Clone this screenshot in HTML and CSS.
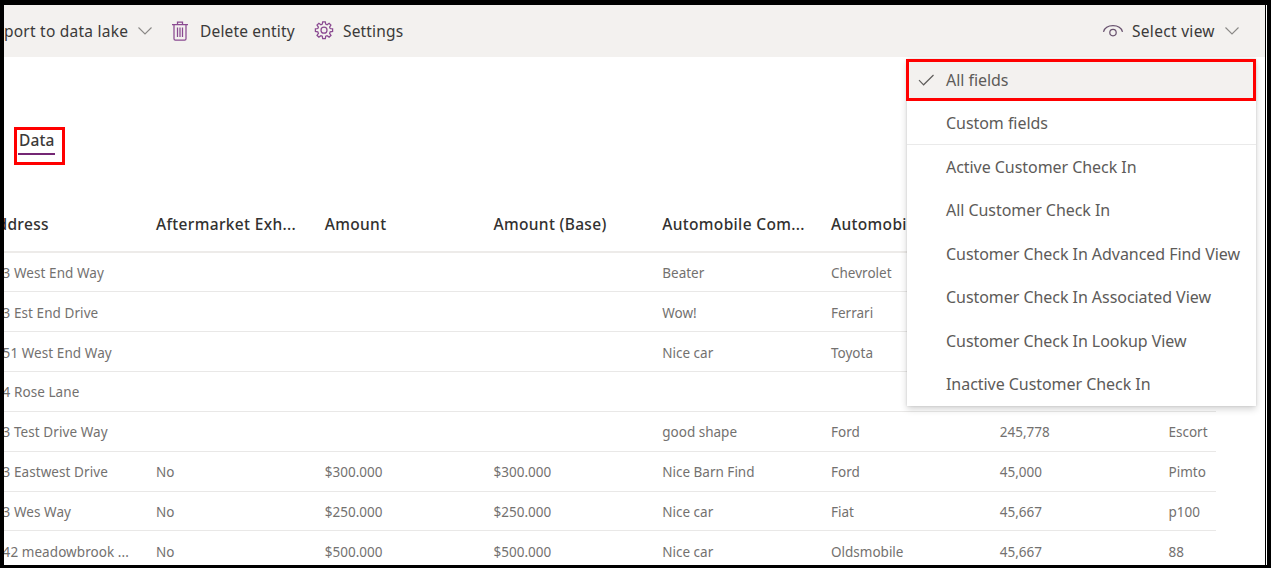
FILE: index.html
```html
<!DOCTYPE html>
<html lang="en">
<head>
<meta charset="utf-8">
<title>Customer Check In</title>
<link rel="stylesheet" href="styles.css">
</head>
<body>
<div class="frame">
<div class="screen">
  <header class="toolbar">
    <div class="commands">
      <span class="label export">port to data lake</span>
      <svg class="chevron" width="16" height="10" viewBox="0 0 16 10"><path d="M1.500 1.500 8 8l6.500-6.500"/></svg>
      <svg class="icon trash" width="18" height="20" viewBox="0 0 18 20"><path d="M1 3.500h16M6.500 3V1h5v2M3 3.500v14.200q0 1.300 1.300 1.300h9.400q1.300 0 1.300-1.300V3.500M6.500 6.500v9.500M9 6.500v9.500M11.500 6.500v9.500"/></svg>
      <span class="label delete">Delete entity</span>
      <svg class="icon gear" width="20" height="20" viewBox="0 0 20 20"><path d="M8.700.8h2.600l.4 2.300 1.400.6 2-1.400 1.800 1.800-1.300 2 .6 1.400 2.400.4v2.500l-2.400.4-.6 1.500 1.400 2-1.900 1.800-2-1.400-1.400.6-.4 2.300H8.700l-.4-2.300-1.400-.6-2 1.400L3 14.300l1.400-2-.6-1.500-2.400-.4V7.900l2.400-.4.6-1.400L3 4.100l1.900-1.800 2 1.400 1.400-.6z"/><circle cx="10" cy="9.200" r="3"/></svg>
      <span class="label settings">Settings</span>
    </div>
    <div class="view-picker">
      <svg class="icon eye" width="22" height="14" viewBox="0 0 22 14"><path d="M1.500 7.800C2.600 4 6 1.700 11 1.700s8.400 2.300 9.500 6.100"/><circle cx="11" cy="8.600" r="3.200"/></svg>
      <span class="label select">Select view</span>
      <svg class="chevron" width="16" height="10" viewBox="0 0 16 10"><path d="M1.500 1.500 8 8l6.500-6.500"/></svg>
    </div>
  </header>
  <nav class="tabs"><div class="tab-outline"><span class="tab">Data</span></div></nav>
  <main class="grid">
    <div class="row head"><span>Address</span><span>Aftermarket Exh...</span><span>Amount</span><span>Amount (Base)</span><span>Automobile Com...</span><span>Automobile</span><span></span><span></span></div>
    <div class="row"><span>123 West End Way</span><span></span><span></span><span></span><span>Beater</span><span>Chevrolet</span><span></span><span></span></div>
    <div class="row"><span>123 Est End Drive</span><span></span><span></span><span></span><span>Wow!</span><span>Ferrari</span><span></span><span></span></div>
    <div class="row"><span>1251 West End Way</span><span></span><span></span><span></span><span>Nice car</span><span>Toyota</span><span></span><span></span></div>
    <div class="row"><span>124 Rose Lane</span><span></span><span></span><span></span><span></span><span></span><span></span><span></span></div>
    <div class="row"><span>123 Test Drive Way</span><span></span><span></span><span></span><span>good shape</span><span>Ford</span><span>245,778</span><span>Escort</span></div>
    <div class="row"><span>123 Eastwest Drive</span><span>No</span><span>$300.000</span><span>$300.000</span><span>Nice Barn Find</span><span>Ford</span><span>45,000</span><span>Pimto</span></div>
    <div class="row"><span>123 Wes Way</span><span>No</span><span>$250.000</span><span>$250.000</span><span>Nice car</span><span>Fiat</span><span>45,667</span><span>p100</span></div>
    <div class="row"><span>1242 meadowbrook ...</span><span>No</span><span>$500.000</span><span>$500.000</span><span>Nice car</span><span>Oldsmobile</span><span>45,667</span><span>88</span></div>
  </main>
  <div class="menu">
    <div class="item selected"><svg class="check" width="17" height="12" viewBox="0 0 17 12"><path d="M1 6.200 5.600 10.800 15.500 1"/></svg><span>All fields</span></div>
    <div class="item">Custom fields</div>
    <div class="divider"></div>
    <div class="item">Active Customer Check In</div>
    <div class="item">All Customer Check In</div>
    <div class="item">Customer Check In Advanced Find View</div>
    <div class="item">Customer Check In Associated View</div>
    <div class="item">Customer Check In Lookup View</div>
    <div class="item">Inactive Customer Check In</div>
  </div>
</div>
<div class="edge"></div>
</div>
</body>
</html>
```

FILE: styles.css
```css
* { box-sizing: border-box; }
body { margin: 0; font-family: "Noto Sans", "Open Sans", sans-serif; color: #3b3a39; }
.frame { display: flex; width: 1271px; height: 568px; padding: 5px 4px 3px 4px; background: #000; overflow: hidden; }
.screen { position: relative; width: 1261px; height: 560px; background: #fff; overflow: hidden; }
.edge { width: 1px; margin-left: 1px; height: 560px; background: #fff; }
svg { fill: none; flex: none; display: block; }
.toolbar { display: flex; justify-content: space-between; height: 52px; background: #f3f1ef; }
.commands, .view-picker { display: flex; align-items: center; white-space: nowrap; font-size: 15.5px; letter-spacing: .17px; }
.label { flex: none; }
.commands { width: 420px; }
.export { width: 124px; letter-spacing: .23px; }
.chevron { stroke: #8a8886; stroke-width: 1.1; margin-left: 9px; }
.icon { stroke: #8a4a91; stroke-width: 1.25; }
.trash { margin-left: 18px; }
.delete { width: 95px; margin-left: 11px; }
.gear { margin-left: 19px; }
.settings { margin-left: 9px; }
.view-picker { width: 163px; }
.eye { stroke: #69536f; }
.select { width: 83px; margin-left: 8px; letter-spacing: .3px; }
.tabs { height: 108px; padding: 70px 0 0 10px; }
.tab-outline { width: 51px; height: 38px; border: 3px solid #f00; padding: 0 0 0 1px; }
.tab { display: block; width: 37px; height: 25px; padding-left: 1px; border-bottom: 2px solid #742774; font-size: 15.5px; line-height: 20px; font-weight: 500; letter-spacing: .1px; white-space: nowrap; }
.grid { padding-top: 31px; width: 1212px; }
.row { display: grid; grid-template-columns: 169px repeat(7, 168.750px); align-items: center; height: 39.850px; margin-left: -17px; padding-top: 2px; border-bottom: 1px solid #e9e8e7; font-size: 13.5px; color: #73716f; white-space: nowrap; width: 1229px; }
.row span:first-child { letter-spacing: .07px; }
.head { height: 56.500px; border-bottom: 2px solid #edebe9; font-size: 15.5px; font-weight: 500; letter-spacing: .33px; color: #323130; }
.head span:first-child { letter-spacing: .33px; }
.menu { position: absolute; left: 903px; top: 54px; width: 349px; height: 347px; background: #fff; box-shadow: 0 3px 7px rgba(0,0,0,.18), 0 0 2px rgba(0,0,0,.12); font-size: 16px; letter-spacing: -.05px; color: #5d5b59; }
.item { display: flex; align-items: center; height: 43.400px; padding-left: 39px; white-space: nowrap; }
.selected { width: 350px; height: 42px; margin-left: -1px; padding: 0 0 1px 10px; border: 3px solid #f00; background: #f3f1ef; }
.check { stroke: #605e5c; stroke-width: 1.2; margin: 0 11px 0 -1px; }
.divider { height: 1px; background: #eaeaea; }
```
